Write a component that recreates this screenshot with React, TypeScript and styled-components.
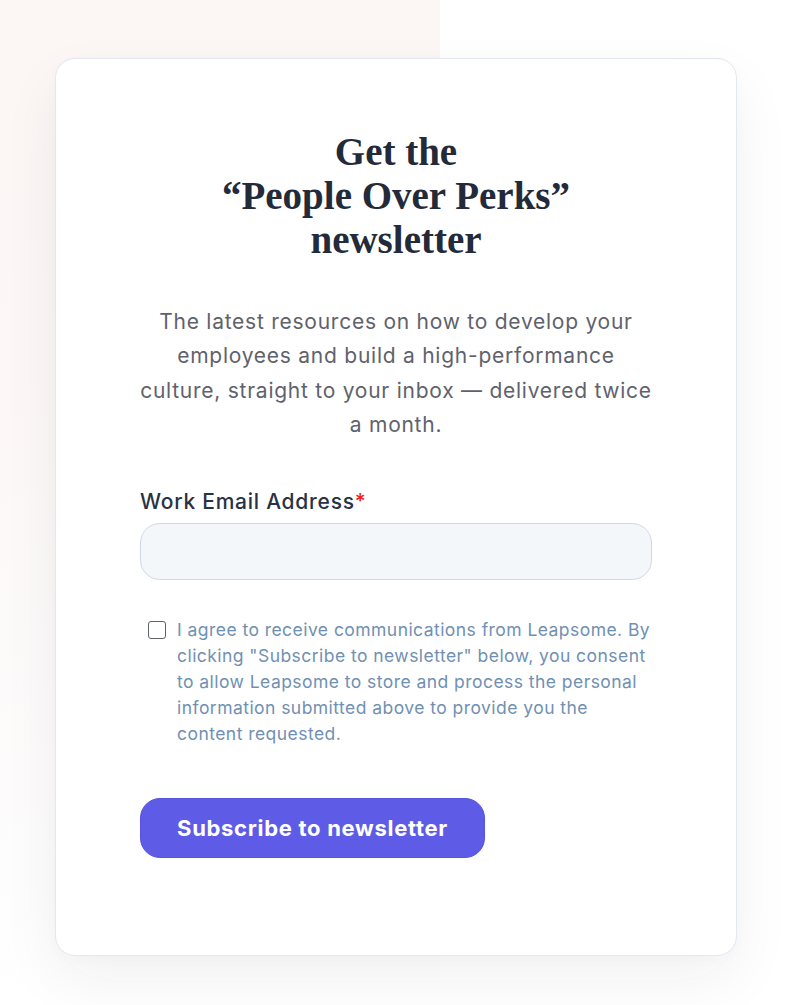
import React from "react";
import styled, { createGlobalStyle } from "styled-components";

const GlobalStyle = createGlobalStyle`
  html, body {
    margin: 0;
    padding: 0;
    background: #ffffff;
  }
  body {
    font-family: "Inter", "Liberation Sans", sans-serif;
  }
  * { box-sizing: border-box; }
`;

const Page = styled.div`
  min-height: 1005px;
  padding: 58px 0 0 55px;
  background:
    linear-gradient(to bottom, #fcf6f5 0%, #fcf8f7 45%, #fdfbfb 75%, rgba(255,255,255,0) 100%) no-repeat 0 0 / 440px 100%,
    #ffffff;
`;

const Card = styled.section`
  width: 682px;
  height: 898px;
  background: #ffffff;
  border: 1px solid #e3e7f1;
  border-radius: 20px;
  box-shadow: 0 24px 60px rgba(30, 30, 60, 0.06), 0 4px 14px rgba(30, 30, 60, 0.02);
  padding: 71px 84px 0;
  display: flex;
  flex-direction: column;
`;

const Heading = styled.h2`
  margin: 0;
  font-family: "Liberation Serif", "DejaVu Serif", serif;
  font-weight: 700;
  font-size: 39px;
  line-height: 44px;
  letter-spacing: 0;
  color: #232b3a;
  text-align: center;
`;

const Lead = styled.p`
  margin: 43px 0 0;
  font-size: 21px;
  line-height: 34.4px;
  color: #5f626d;
  text-align: center;
  letter-spacing: 0.75px;
  white-space: nowrap;
`;

const Label = styled.label`
  margin-top: 47px;
  font-size: 21px;
  line-height: 24px;
  font-weight: 500;
  color: #273244;
  letter-spacing: 0.75px;
`;

const Required = styled.span`
  color: #f21d1d;
`;

const EmailInput = styled.input`
  margin-top: 9px;
  width: 100%;
  height: 57px;
  border: 1.5px solid #cfd9e6;
  border-radius: 20px;
  background: #f4f7fa;
  padding: 0 20px;
  font-size: 18px;
  font-family: inherit;
  outline: none;
`;

const ConsentRow = styled.div`
  margin-top: 37px;
  display: flex;
  align-items: flex-start;
  gap: 11px;
  padding-left: 8px;
`;

const Box = styled.input.attrs({ type: "checkbox" })`
  appearance: none;
  margin: 4px 0 0;
  width: 18px;
  height: 18px;
  flex: none;
  border: 1.5px solid #5f6268;
  border-radius: 3px;
  background: #fff;
`;

const ConsentText = styled.p`
  margin: 0;
  font-size: 17.5px;
  line-height: 26px;
  color: #7090b3;
  letter-spacing: 0.45px;
  white-space: nowrap;
`;

const SubmitButton = styled.button`
  margin-top: 51px;
  align-self: flex-start;
  width: 345px;
  height: 60px;
  border: 1px solid #5553e0;
  border-radius: 20px;
  background: #5e5ce6;
  color: #ffffff;
  font-family: "Inter", "Liberation Sans", sans-serif;
  font-weight: 700;
  font-size: 22px;
  letter-spacing: 0.7px;
  cursor: pointer;
`;

export default function App() {
  return (
    <>
      <GlobalStyle />
      <Page>
        <Card>
          <Heading>
            Get the
            <br />
            “People Over Perks”
            <br />
            newsletter
          </Heading>
          <Lead>
            The latest resources on how to develop your
            <br />
            employees and build a high-performance
            <br />
            culture, straight to your inbox — delivered twice
            <br />a month.
          </Lead>
          <Label htmlFor="email">
            Work Email Address<Required>*</Required>
          </Label>
          <EmailInput id="email" type="email" />
          <ConsentRow>
            <Box id="consent" />
            <ConsentText>
              I agree to receive communications from Leapsome. By
              <br />
              clicking "Subscribe to newsletter" below, you consent
              <br />
              to allow Leapsome to store and process the personal
              <br />
              information submitted above to provide you the
              <br />
              content requested.
            </ConsentText>
          </ConsentRow>
          <SubmitButton type="button">Subscribe to newsletter</SubmitButton>
        </Card>
      </Page>
    </>
  );
}
